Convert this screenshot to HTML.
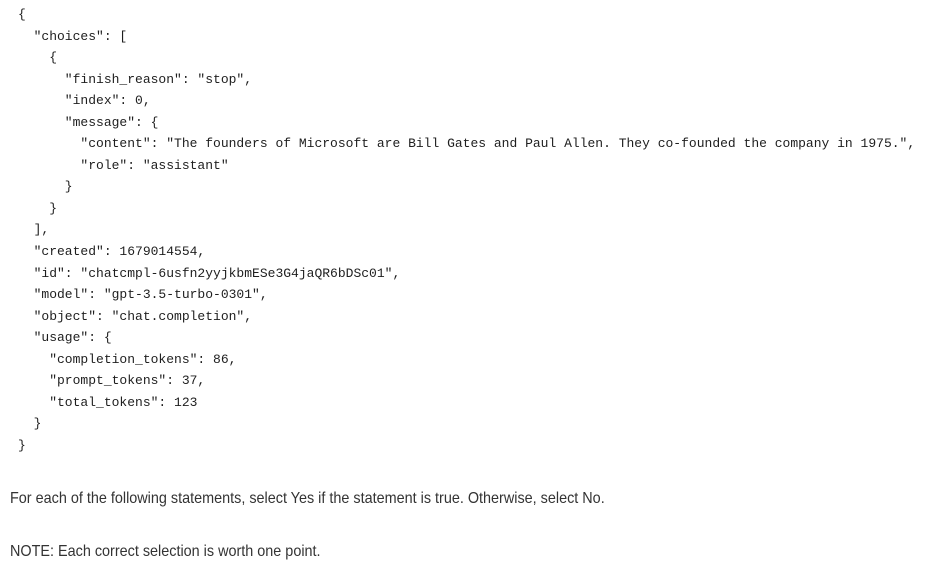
<!DOCTYPE html>
<html><head><meta charset="utf-8"><style>
html,body{margin:0;padding:0;background:#fff;width:928px;height:576px;overflow:hidden}
pre{position:absolute;left:18px;top:4px;margin:0;font-family:"Liberation Mono",monospace;font-size:13px;line-height:21.55px;color:#1e1e1e}
.p{position:absolute;left:10px;margin:0;font-family:"Liberation Sans",sans-serif;font-size:16px;color:#333;white-space:nowrap;transform:scaleX(0.9);transform-origin:0 0}
</style></head><body>
<pre>{
  "choices": [
    {
      "finish_reason": "stop",
      "index": 0,
      "message": {
        "content": "The founders of Microsoft are Bill Gates and Paul Allen. They co-founded the company in 1975.",
        "role": "assistant"
      }
    }
  ],
  "created": 1679014554,
  "id": "chatcmpl-6usfn2yyjkbmESe3G4jaQR6bDSc01",
  "model": "gpt-3.5-turbo-0301",
  "object": "chat.completion",
  "usage": {
    "completion_tokens": 86,
    "prompt_tokens": 37,
    "total_tokens": 123
  }
}</pre>
<p class="p" style="top:490px">For each of the following statements, select Yes if the statement is true. Otherwise, select No.</p>
<p class="p" style="top:543px">NOTE: Each correct selection is worth one point.</p>
</body></html>
